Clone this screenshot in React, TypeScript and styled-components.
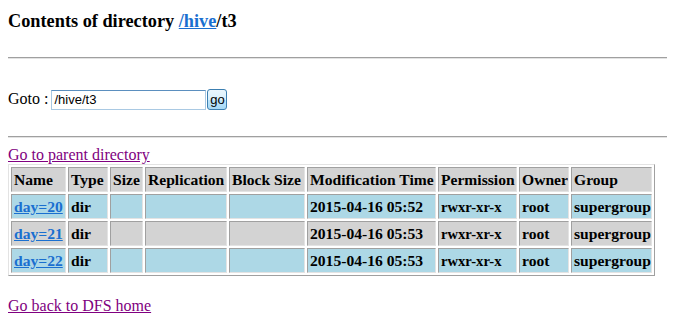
import React from "react";
import styled, { createGlobalStyle } from "styled-components";

const GlobalStyle = createGlobalStyle`
  html, body {
    margin: 0;
    background: #ffffff;
  }
  body {
    margin: 8px;
    font-family: "Liberation Serif", "Times New Roman", serif;
    font-size: 16px;
    color: #000000;
  }
`;

type Entry = {
  name: string;
  time: string;
};

const entries: Entry[] = [
  { name: "day=20", time: "2015-04-16 05:52" },
  { name: "day=21", time: "2015-04-16 05:53" },
  { name: "day=22", time: "2015-04-16 05:53" },
];

const columns: { label: string; width: number }[] = [
  { label: "Name", width: 55 },
  { label: "Type", width: 40 },
  { label: "Size", width: 33 },
  { label: "Replication", width: 82 },
  { label: "Block Size", width: 76 },
  { label: "Modification Time", width: 129 },
  { label: "Permission", width: 79 },
  { label: "Owner", width: 50 },
  { label: "Group", width: 81 },
];

export default function App(): React.ReactElement {
  return (
    <>
      <GlobalStyle />
      <Title>
        Contents of directory <BlueLink href="#">/hive</BlueLink>/t3
      </Title>
      <Rule />
      <GotoForm onSubmit={(e) => e.preventDefault()}>
        <GotoLabel>Goto :</GotoLabel>
        <PathInput defaultValue="/hive/t3" />
        <GoButton type="submit">go</GoButton>
      </GotoForm>
      <Rule $top={26} />
      <NavLine $top={8}>
        <VisitedLink href="#">Go to parent directory</VisitedLink>
      </NavLine>
      <Listing>
        <colgroup>
          {columns.map((c) => (
            <col key={c.label} style={{ width: c.width }} />
          ))}
        </colgroup>
        <thead>
          <tr>
            {columns.map((c) => (
              <HeadCell key={c.label}>{c.label}</HeadCell>
            ))}
          </tr>
        </thead>
        <tbody>
          {entries.map((row, i) => {
            const shade = i % 2 === 0 ? "blue" : "grey";
            return (
              <tr key={row.name}>
                <Cell $shade={shade}>
                  <BlueLink href="#">{row.name}</BlueLink>
                </Cell>
                <Cell $shade={shade}>dir</Cell>
                <Cell $shade={shade} />
                <Cell $shade={shade} />
                <Cell $shade={shade} />
                <Cell $shade={shade}>{row.time}</Cell>
                <Cell $shade={shade}>
                  <Small>rwxr-xr-x</Small>
                </Cell>
                <Cell $shade={shade}>root</Cell>
                <Cell $shade={shade}>supergroup</Cell>
              </tr>
            );
          })}
        </tbody>
      </Listing>
      <NavLine $top={21}>
        <VisitedLink href="#">Go back to DFS home</VisitedLink>
      </NavLine>
    </>
  );
}

const Title = styled.h3`
  margin: 2px 0 0;
  font-size: 18.3px;
  line-height: 22px;
  font-weight: bold;
`;

const BlueLink = styled.a`
  color: #1a6fd0;
  text-decoration: underline;
`;

const VisitedLink = styled.a`
  color: #800080;
  text-decoration: underline;
`;

const Rule = styled.hr<{ $top?: number }>`
  margin: ${(p) => p.$top ?? 25}px 0 0;
  height: 0;
  border: none;
  border-top: 1px solid #a0a0a0;
  border-bottom: 1px solid #e3e3e3;
`;

const GotoForm = styled.form`
  display: flex;
  align-items: center;
  margin: 29px 0 0;
  height: 22px;
`;

const GotoLabel = styled.span`
  margin-right: 3px;
`;

const PathInput = styled.input`
  box-sizing: border-box;
  width: 155px;
  height: 20px;
  margin: 1px 1px 0 0;
  padding: 1px 2px;
  border: 1px solid #a9c9e3;
  border-top-color: #5b8fbf;
  font-family: "Liberation Sans", Arial, sans-serif;
  font-size: 13px;
  color: #000000;
  outline: none;
`;

const GoButton = styled.button`
  box-sizing: border-box;
  width: 20px;
  height: 21px;
  padding: 0;
  border: 1px solid #3c7fb1;
  border-radius: 3px;
  background: linear-gradient(#eaf6fd, #d9f0fc 50%, #bee6fd 51%, #a7d9f5);
  font-family: "Liberation Sans", Arial, sans-serif;
  font-size: 13px;
  color: #000000;
`;

const NavLine = styled.div<{ $top: number }>`
  margin-top: ${(p) => p.$top}px;
  line-height: 18px;
`;

const Listing = styled.table`
  table-layout: fixed;
  width: 647px;
  border-collapse: separate;
  border-spacing: 2px;
  border: 1px solid;
  border-color: #e3e3e3 #a0a0a0 #a0a0a0 #e3e3e3;
`;

const HeadCell = styled.th`
  box-sizing: border-box;
  height: 25px;
  padding: 1px 2px;
  text-align: left;
  white-space: nowrap;
  overflow: hidden;
  background: #d3d3d3;
  border: 1px solid;
  border-color: #a0a0a0 #e3e3e3 #e3e3e3 #a0a0a0;
  font-weight: bold;
  font-size: 15.6px;
  line-height: 19px;
`;

const Cell = styled.td<{ $shade: "blue" | "grey" }>`
  box-sizing: border-box;
  height: 25px;
  padding: 1px 2px;
  white-space: nowrap;
  overflow: hidden;
  background: ${(p) => (p.$shade === "blue" ? "#add8e6" : "#d3d3d3")};
  border: 1px solid;
  border-color: #a0a0a0 #e3e3e3 #e3e3e3 #a0a0a0;
  font-weight: bold;
  font-size: 15.6px;
  line-height: 19px;
`;

const Small = styled.span`
  font-size: 14.6px;
`;
